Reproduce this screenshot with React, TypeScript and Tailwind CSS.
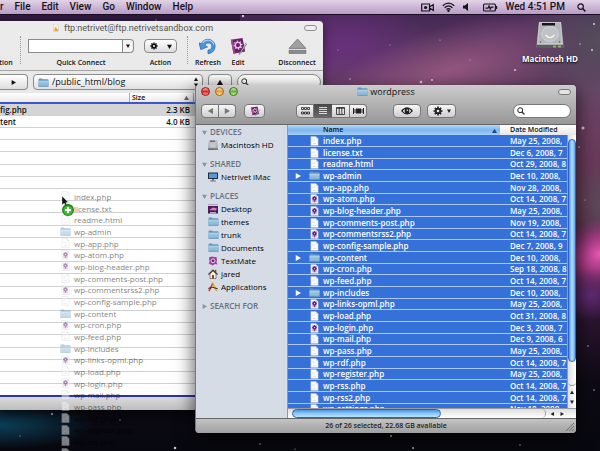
import type { ReactNode } from "react";
import clsx from "clsx";

type Kind = "file" | "php" | "folder";

const files: { name: string; kind: Kind; date: string }[] = [
  { name: "index.php", kind: "file", date: "May 25, 2008," },
  { name: "license.txt", kind: "file", date: "Dec 6, 2008, 7" },
  { name: "readme.html", kind: "file", date: "Oct 29, 2008, 8" },
  { name: "wp-admin", kind: "folder", date: "Dec 10, 2008," },
  { name: "wp-app.php", kind: "file", date: "Nov 28, 2008," },
  { name: "wp-atom.php", kind: "php", date: "Oct 14, 2008, 7" },
  { name: "wp-blog-header.php", kind: "php", date: "May 25, 2008," },
  { name: "wp-comments-post.php", kind: "file", date: "Nov 19, 2008," },
  { name: "wp-commentsrss2.php", kind: "php", date: "Oct 14, 2008, 7" },
  { name: "wp-config-sample.php", kind: "file", date: "Dec 7, 2008, 9" },
  { name: "wp-content", kind: "folder", date: "Dec 10, 2008," },
  { name: "wp-cron.php", kind: "php", date: "Sep 18, 2008, 8" },
  { name: "wp-feed.php", kind: "file", date: "Oct 14, 2008, 7" },
  { name: "wp-includes", kind: "folder", date: "Dec 10, 2008," },
  { name: "wp-links-opml.php", kind: "php", date: "May 25, 2008," },
  { name: "wp-load.php", kind: "file", date: "Oct 31, 2008, 8" },
  { name: "wp-login.php", kind: "php", date: "Dec 3, 2008, 7" },
  { name: "wp-mail.php", kind: "file", date: "Dec 9, 2008, 6" },
  { name: "wp-pass.php", kind: "file", date: "May 25, 2008," },
  { name: "wp-rdf.php", kind: "file", date: "Oct 14, 2008, 7" },
  { name: "wp-register.php", kind: "file", date: "May 25, 2008," },
  { name: "wp-rss.php", kind: "file", date: "Oct 14, 2008, 7" },
  { name: "wp-rss2.php", kind: "file", date: "Oct 14, 2008, 7" },
  { name: "wp-settings.php", kind: "file", date: "Nov 10, 2008," },
];

const stars = [
  [243, 16, 1.2], [421, 82, 1.3], [432, 80, 1], [515, 70, 1], [594, 24, 1], [592, 50, 1],
  [580, 44, 0.7], [583, 128, 1.5], [579, 147, 0.8], [350, 79, 0.7], [338, 50, 0.5], [470, 60, 0.5],
  [440, 40, 0.5], [390, 45, 0.5], [52, 414, 1], [175, 448, 1.3], [120, 420, 0.6], [20, 436, 0.6],
  [260, 444, 0.7], [391, 436, 1], [413, 448, 0.9], [588, 346, 0.7], [594, 390, 0.7], [585, 200, 0.6],
  [295, 449, 0.6], [520, 445, 0.7], [156, 20, 0.6],
];

function Wallpaper() {
  return (
    <svg className="absolute inset-0 h-full w-full" viewBox="0 0 600 451" preserveAspectRatio="none" aria-hidden="true">
      <defs>
        <linearGradient id="sky" x1="0" y1="0" x2="0" y2="1">
          <stop offset="0" stopColor="#3d2350" />
          <stop offset="0.2" stopColor="#6b4468" />
          <stop offset="0.45" stopColor="#683450" />
          <stop offset="0.7" stopColor="#2c1530" />
          <stop offset="0.85" stopColor="#0d0a14" />
          <stop offset="1" stopColor="#07080f" />
        </linearGradient>
        <radialGradient id="violet">
          <stop offset="0" stopColor="#6f2f86" stopOpacity="0.75" />
          <stop offset="1" stopColor="#6f2f86" stopOpacity="0" />
        </radialGradient>
        <radialGradient id="rose">
          <stop offset="0" stopColor="#a8608c" stopOpacity="0.7" />
          <stop offset="1" stopColor="#a8608c" stopOpacity="0" />
        </radialGradient>
        <radialGradient id="pink">
          <stop offset="0" stopColor="#e85ab6" />
          <stop offset="0.4" stopColor="#c04094" stopOpacity="0.8" />
          <stop offset="1" stopColor="#a03080" stopOpacity="0" />
        </radialGradient>
        <radialGradient id="grey">
          <stop offset="0" stopColor="#55505c" stopOpacity="0.9" />
          <stop offset="1" stopColor="#55505c" stopOpacity="0" />
        </radialGradient>
        <radialGradient id="teal">
          <stop offset="0" stopColor="#0b4560" stopOpacity="0.9" />
          <stop offset="1" stopColor="#0b4560" stopOpacity="0" />
        </radialGradient>
      </defs>
      <rect width="600" height="451" fill="url(#sky)" />
      <ellipse cx="345" cy="45" rx="90" ry="50" fill="url(#violet)" />
      <ellipse cx="450" cy="70" rx="150" ry="45" fill="url(#rose)" transform="rotate(-18 450 70)" />
      <ellipse cx="600" cy="40" rx="80" ry="75" fill="url(#grey)" />
      <ellipse cx="605" cy="205" rx="38" ry="45" fill="url(#grey)" />
      <ellipse cx="600" cy="254" rx="48" ry="36" fill="url(#pink)" transform="rotate(-25 600 254)" />
      <ellipse cx="590" cy="295" rx="35" ry="26" fill="url(#violet)" />
      <ellipse cx="0" cy="425" rx="95" ry="24" fill="url(#teal)" />
      <rect y="14" width="240" height="7" fill="#241230" opacity="0.7" />
      {stars.map(([x, y, r]) => (
        <circle key={`${x}-${y}`} cx={x} cy={y} r={r} fill="#f3dcf0" opacity="0.85" />
      ))}
    </svg>
  );
}

function FolderIcon({ className }: { className?: string }) {
  return (
    <svg viewBox="0 0 12 10" className={clsx("h-[9px] w-[11px] shrink-0", className)} aria-hidden="true">
      <path d="M.5 2V1.2Q.5.5 1.2.5H4.200L5.200 1.500H10.800Q11.500 1.500 11.500 2.200V9.500H.5Z" fill="#6398be" />
      <path d="M.5 3H11.500V9.500H.5Z" fill="#8fbddb" />
      <path d="M.5 3H11.500V5H.5Z" fill="#a9cfe6" />
      <path d="M.5 9.200H11.500" stroke="#5689ad" strokeWidth=".7" />
    </svg>
  );
}

function FileIcon({ php }: { php?: boolean }) {
  return (
    <svg viewBox="0 0 9 11" className="h-[10px] w-[9px] shrink-0" aria-hidden="true">
      <path d="M.5.5H6L8.500 3V10.500H.5Z" fill="#fafafa" stroke="#c4c8d0" strokeWidth=".5" />
      <path d="M6 .5V3H8.500Z" fill="#c9ced8" />
      {php ? (
        <>
          <path d="M2 2.500H7V9H5.500L4.500 10L3.500 9H2Z" fill="#c9a6d2" />
          <circle cx="4.500" cy="5" r="2.300" fill="#6d2f7e" />
          <path d="M4.500 2.200V8.800M2.200 5H6.800M3 3.400L6 6.600M6 3.400L3 6.600" stroke="#58226a" strokeWidth=".8" />
          <circle cx="4.500" cy="5" r=".7" fill="#e9d3ee" />
        </>
      ) : (
        <path d="M3 8.300H6M2 4.500H5" stroke="#d5d5d5" strokeWidth=".8" />
      )}
    </svg>
  );
}

function KindIcon({ kind }: { kind: Kind }) {
  return (
    <span className="flex w-[11px] shrink-0 items-center justify-center">
      {kind === "folder" ? <FolderIcon /> : <FileIcon php={kind === "php"} />}
    </span>
  );
}

function GearIcon({ className }: { className?: string }) {
  return (
    <svg viewBox="0 0 12 12" className={className} aria-hidden="true">
      <g stroke="currentColor" strokeWidth="2">
        <path d="M6 .6V11.400M.6 6H11.400M2.200 2.200L9.800 9.800M9.800 2.200L2.200 9.800" />
      </g>
      <circle cx="6" cy="6" r="3.900" fill="currentColor" />
      <circle cx="6" cy="6" r="1.600" fill="#ececec" />
    </svg>
  );
}

function EditIcon({ className }: { className?: string }) {
  return (
    <svg viewBox="0 0 20 20" className={className} aria-hidden="true">
      <path d="M2 3L15 1L18 16L5 18.500Z" fill="#6d1f6b" />
      <path d="M2 3L4 2.700L7 18.100L5 18.500Z" fill="#9c4c97" />
      <g transform="rotate(-9 10 9)" stroke="#e3bfe3" strokeWidth="1.500" fill="none">
        <circle cx="10" cy="9" r="3" />
        <path d="M10 4V6M10 12V14M5 9H7M13 9H15M6.500 5.500L8 7M12 11L13.500 12.500M13.500 5.500L12 7M8 11L6.500 12.500" />
      </g>
      <path d="M18.500 7L12 17.500L11 19.500L13 18L19.500 8Z" fill="#e8e8e8" stroke="#444" strokeWidth=".6" />
    </svg>
  );
}

function SearchIcon({ className }: { className?: string }) {
  return (
    <svg viewBox="0 0 10 10" className={className} fill="none" stroke="currentColor" aria-hidden="true">
      <circle cx="4" cy="4" r="3" strokeWidth="1.300" />
      <path d="M6.200 6.200L9.300 9.300" strokeWidth="1.700" />
    </svg>
  );
}

function Triangle({ dir, className }: { dir: "up" | "down" | "left" | "right"; className?: string }) {
  const paths = { up: "M0 8L4 1L8 8Z", down: "M0 1L4 8L8 1Z", left: "M8 0L1 4L8 8Z", right: "M1 0L8 4L1 8Z" };
  return (
    <svg viewBox="0 0 8 8" className={clsx("shrink-0", className)} fill="currentColor" aria-hidden="true">
      <path d={paths[dir]} />
    </svg>
  );
}

function DriveIcon({ className }: { className?: string }) {
  return (
    <svg viewBox="0 0 28 28" className={className} aria-hidden="true">
      <path d="M3 1H25L27.500 24V27H.5V24Z" fill="#8d8f92" />
      <path d="M3 1H25L27 23.500H1Z" fill="#c6c8ca" />
      <path d="M4 2H24L25.500 22H2.500Z" fill="#b3b5b8" />
      <path d="M6 2H19V4.500H6Z" fill="#17171a" />
      <ellipse cx="14" cy="13" rx="8.500" ry="7.500" fill="#c0c2c5" stroke="#d6d8da" strokeWidth=".7" />
      <path d="M9.500 14Q14 19 18.500 14" fill="none" stroke="#f7f7f7" strokeWidth="1.200" />
      <circle cx="4.500" cy="21" r=".7" fill="#555" />
      <circle cx="23.500" cy="21" r=".7" fill="#555" />
      <path d="M.5 24H27.500V27H.5Z" fill="#5a5c5f" />
      <path d="M17 24.500H20V26.500H17ZM22 24.500H25V26.500H22Z" fill="#a8a46a" />
    </svg>
  );
}

function MenuBar() {
  return (
    <header className="relative flex h-3.5 items-center bg-linear-to-b from-[#e2d3e6] to-[#b99cc6] pr-3.5 font-['Roboto',sans-serif] text-[10px] leading-[14px] font-medium text-[#17121b] shadow-[0_1px_0_#1a0d24]">
      <nav className="flex gap-[11px]">
        <span>r</span>
        {["File", "Edit", "View", "Go", "Window", "Help"].map((m) => (
          <button key={m} type="button">{m}</button>
        ))}
      </nav>
      <div className="ml-auto flex items-center">
        <svg viewBox="0 0 13 9" className="h-[9px] w-[13px]" aria-hidden="true">
          <path d="M.7 1H8.500V8H.7ZM8.500 4L12.300 1.500V7.500L8.500 5" fill="none" stroke="currentColor" strokeWidth="1.200" />
          <circle cx="4.600" cy="4.500" r="1.600" fill="currentColor" />
        </svg>
        <svg viewBox="0 0 14 10" className="ml-2 h-[10px] w-[13px]" fill="none" stroke="currentColor" strokeWidth="1.400" aria-hidden="true">
          <path d="M.8 3.600Q7-1.800 13.200 3.600M2.800 5.700Q7 2 11.200 5.700M4.800 7.600Q7 5.800 9.200 7.600" />
          <circle cx="7" cy="9" r=".6" fill="currentColor" />
        </svg>
        <svg viewBox="0 0 6 8" className="ml-2 h-2 w-1.5" aria-hidden="true">
          <path d="M0 2.500H2L5 0V8L2 5.500H0Z" fill="currentColor" />
        </svg>
        <svg viewBox="0 0 15 9" className="ml-3.5 h-[9px] w-[15px]" fill="none" stroke="currentColor" aria-hidden="true">
          <rect x=".6" y="1" width="11.800" height="7" rx="1" strokeWidth="1.100" />
          <path d="M13.500 3V6" strokeWidth="1.300" />
          <path d="M2.500 5.200H5L6 3L7.300 6L8.200 4.200H10.500" strokeWidth="1.200" />
        </svg>
        <span className="ml-2">Wed 4:51 PM</span>
        <SearchIcon className="ml-3 h-[9px] w-[9px]" />
      </div>
    </header>
  );
}

function ToolItem({ label, className, children }: { label: string; className?: string; children: ReactNode }) {
  return (
    <div className={clsx("flex shrink-0 flex-col items-center", className)}>
      <div className="flex h-5 w-full items-center justify-center">{children}</div>
      <span className="mt-0.5 text-[7px] leading-[10px] font-semibold whitespace-nowrap">{label}</span>
    </div>
  );
}

function FtpWindow() {
  return (
    <section className="absolute top-[21px] left-0 flex h-[389px] w-[323px] flex-col overflow-hidden rounded-tr bg-linear-to-b from-[#ececec] to-[#d4d4d4] text-[#111] shadow-[0_4px_10px_rgba(0,0,0,0.5)]">
      <div className="flex h-3.5 shrink-0 items-center pr-1.5 pl-[52px] text-[#555]">
        <svg viewBox="0 0 10 10" className="h-2 w-2" aria-hidden="true">
          <path d="M2 0H6L8 2V9H2Z" fill="#f8f4e8" stroke="#bbb" strokeWidth=".5" />
          <path d="M3 9Q2 6 5 3L6 6L8 7L7 9Z" fill="#eda632" />
        </svg>
        <h2 className="ml-1 font-['Roboto',sans-serif] text-[9px] leading-[14px]">ftp:netrivet@ftp.netrivetsandbox.com</h2>
        <button type="button" aria-label="Toggle toolbar" className="ml-auto h-1.5 w-[13px] rounded-full border border-[#8f8f8f] bg-[#eee]" />
      </div>
      <div className="flex h-[36px] shrink-0 border-b border-[#a5a5a5] pt-px pr-1.5">
        <ToolItem label="tion" className="w-3"><span /></ToolItem>
        <div className="ml-2 h-7 border-l border-dotted border-[#999]" />
        <ToolItem label="Quick Connect" className="ml-[7px] w-[106px]">
          <div className="flex h-3.5 w-full">
            <input aria-label="Quick Connect" className="h-3.5 min-w-0 flex-1 border border-[#8a8a8a] bg-white" />
            <button type="button" aria-label="Show servers" className="flex w-[11px] items-center justify-center rounded-r-sm border border-l-0 border-[#8a8a8a] bg-[#f2f2f2]">
              <Triangle dir="down" className="size-1" />
            </button>
          </div>
        </ToolItem>
        <ToolItem label="Action" className="ml-2.5 w-[33px]">
          <button type="button" aria-label="Action" className="flex h-3.5 w-full items-center justify-around rounded-sm border border-[#8a8a8a] bg-linear-to-b from-white to-[#dcdcdc]">
            <GearIcon className="size-2" />
            <Triangle dir="down" className="size-[5px]" />
          </button>
        </ToolItem>
        <div className="ml-2.5 h-7 border-l border-dotted border-[#999]" />
        <ToolItem label="Refresh" className="ml-1.5 w-7">
          <svg viewBox="0 0 20 20" className="size-[18px]" aria-hidden="true">
            <path d="M10 18.500A8 8 0 1 0 2.500 7.500L0 6.500L2 14L9.500 11L6.500 9.500A4 4 0 1 1 10 14.500Z" fill="#4b96df" stroke="#2463ab" strokeWidth=".8" />
            <path d="M4 6.500A7 7 0 0 1 16.500 8.500" fill="none" stroke="#a9d3f7" strokeWidth="1.200" />
          </svg>
        </ToolItem>
        <ToolItem label="Edit" className="ml-1.5 w-5">
          <EditIcon className="size-[18px]" />
        </ToolItem>
        <ToolItem label="Disconnect" className="ml-auto w-10">
          <svg viewBox="0 0 20 16" className="h-[15px] w-[19px]" aria-hidden="true">
            <path d="M10 0L19 10H1Z" fill="#a0a0a0" stroke="#6e6e6e" strokeWidth=".8" />
            <path d="M1 12H19V15.500H1Z" fill="#8a8a8a" stroke="#666" strokeWidth=".6" />
          </svg>
        </ToolItem>
      </div>
      <div className="flex h-[22px] shrink-0 items-center">
        <button type="button" aria-label="Forward" className="flex h-4 w-7 items-center justify-center rounded-r border border-l-0 border-[#8c8c8c] bg-linear-to-b from-white to-[#dedede]">
          <Triangle dir="right" className="size-[5px]" />
        </button>
        <div className="ml-[5px] flex h-4 w-[170px] items-center rounded border border-[#8c8c8c] bg-linear-to-b from-white to-[#e0e0e0] pr-1 pl-1">
          <FolderIcon />
          <select aria-label="Remote path" className="h-3.5 min-w-0 flex-1 appearance-none pl-[3px] text-[9px] leading-[14px] font-medium">
            <option>/public_html/blog</option>
          </select>
          <span className="flex flex-col gap-0.5">
            <Triangle dir="up" className="size-1" />
            <Triangle dir="down" className="size-1" />
          </span>
        </div>
        <button type="button" aria-label="Parent folder" className="ml-[5px] flex h-4 w-6 items-center justify-center rounded border border-[#8c8c8c] bg-linear-to-b from-white to-[#dedede]">
          <Triangle dir="up" className="size-1.5" />
        </button>
        <label className="ml-[5px] flex h-4 w-[84px] items-center rounded-full border border-[#8c8c8c] bg-white pl-[3px]">
          <SearchIcon className="size-2 text-[#444]" />
          <input aria-label="Search files" className="min-w-0 flex-1" />
        </label>
      </div>
      <div className="flex-1 border-b-2 border-[#2b35a8] bg-white">
        <table className="w-full table-fixed border-separate border-spacing-0 text-[8px] leading-[11px] font-semibold">
          <thead>
            <tr className="h-[11px] bg-linear-to-b from-white to-[#e6e6e6] text-left text-[7px]">
              <th aria-label="Name" className="w-[129px] border-b-2 border-[#3f55cf]" />
              <th className="w-16 border-b-2 border-b-[#3f55cf] p-0 leading-[9px] font-semibold">
                <span className="flex items-center justify-between border-l border-[#aaa] pr-1 pl-0.5">
                  Size
                  <Triangle dir="up" className="size-[5px] text-[#666]" />
                </span>
              </th>
              <th aria-label="Date" className="border-b-2 border-l border-b-[#3f55cf] border-l-[#aaa]" />
            </tr>
          </thead>
          <tbody>
            {Array.from({ length: 23 }, (_, i) => (
              <tr key={i} className={clsx("h-3 nth-[5n]:h-[13px]", i === 0 && "bg-[#d4d4d4]")}>
                <td className="border-b border-[#d0d0d0] p-0">{["fig.php", "tent"][i]}</td>
                <td className="border-b border-[#d0d0d0] p-0 pr-[3px] text-right">{["2.3 KB", "4.0 KB"][i]}</td>
                <td className="border-b border-[#d0d0d0] p-0" />
              </tr>
            ))}
          </tbody>
        </table>
      </div>
      <div className="h-[13px] shrink-0 bg-linear-to-b from-[#dcdcdc] to-[#bdbdbd]" />
    </section>
  );
}

function DragGhost() {
  return (
    <div className="pointer-events-none absolute top-[190px] left-[60px]">
      <ul className="text-[8px] leading-[11px] font-medium text-black opacity-50">
        {files.slice(0, 23).map((f) => (
          <li key={f.name} className="flex h-3 items-center gap-[3px] nth-[3n]:h-[11px]">
            <KindIcon kind={f.kind} />
            <span>{f.name}</span>
          </li>
        ))}
      </ul>
      <svg viewBox="0 0 14 22" className="absolute top-1.5 left-0.5 h-[22px] w-3.5" aria-hidden="true">
        <path d="M0 0V9L2.200 7.200L3.800 10.500L5.400 9.700L3.800 6.600H6.500Z" fill="#111" stroke="#fff" strokeWidth=".4" />
        <circle cx="6" cy="14" r="6" fill="#1d7a1d" />
        <circle cx="6" cy="14.500" r="4.800" fill="#45b53a" />
        <path d="M6 11V17M3 14H9" stroke="#fff" strokeWidth="1.800" />
      </svg>
    </div>
  );
}

const toolButton =
  "flex h-3.5 items-center justify-center border border-[#777] bg-linear-to-b from-[#f6f6f6] to-[#cfcfcf] text-[#222]";

function SideHeading({ children, closed }: { children: ReactNode; closed?: boolean }) {
  return (
    <h3 className="flex h-3 items-center gap-[3px] text-[8px] leading-3 font-semibold text-[#66717f]">
      <Triangle dir={closed ? "right" : "down"} className="size-[5px] text-[#8b94a0]" />
      {children}
    </h3>
  );
}

function SideItem({ icon, children }: { icon: ReactNode; children: ReactNode }) {
  return (
    <a href="#" className="flex h-[13px] items-center gap-[3px] pl-1.5 text-[8px] leading-3 font-medium text-black">
      <span className="flex w-2.5 shrink-0 justify-center">{icon}</span>
      {children}
    </a>
  );
}

function Sidebar() {
  return (
    <aside className="flex w-[92px] shrink-0 flex-col gap-[7px] border-r border-[#8e98a8] bg-[#d6dce6] pt-px pl-1.5">
      <div>
        <SideHeading>DEVICES</SideHeading>
        <SideItem icon={<DriveIcon className="size-2.5" />}>Macintosh HD</SideItem>
      </div>
      <div>
        <SideHeading>SHARED</SideHeading>
        <SideItem
          icon={
            <svg viewBox="0 0 10 10" className="size-2.5" aria-hidden="true">
              <path d="M0 .5H10V7H0Z" fill="#222c38" />
              <path d="M1 1.500H9V6H1Z" fill="#4e9be0" />
              <path d="M4 7H6V8.500H8V9.500H2V8.500H4Z" fill="#777" />
            </svg>
          }
        >
          Netrivet iMac
        </SideItem>
      </div>
      <div>
        <SideHeading>PLACES</SideHeading>
        <SideItem
          icon={
            <svg viewBox="0 0 10 10" className="size-2.5" aria-hidden="true">
              <path d="M0 .5H10V9.500H0Z" fill="#4b1c56" />
              <path d="M0 .5H10V2H0Z" fill="#dfc6e4" />
              <path d="M1 6L5 3.500L9 4.500L8 6.500Z" fill="#e277c2" />
              <path d="M2 8H8V9.500H2Z" fill="#9fb4d0" />
            </svg>
          }
        >
          Desktop
        </SideItem>
        <SideItem icon={<FolderIcon />}>themes</SideItem>
        <SideItem icon={<FolderIcon />}>trunk</SideItem>
        <SideItem icon={<FolderIcon />}>Documents</SideItem>
        <SideItem
          icon={
            <svg viewBox="0 0 10 10" className="size-2.5" aria-hidden="true">
              <path d="M1 1.500L4 .5L6 1L8.500 1L9 4L8.500 6L9.500 8.500L7 8L4.500 9.500L3 8.500L1 8L1.500 5Z" fill="#9a3f9b" />
              <circle cx="5" cy="4.800" r="2" fill="none" stroke="#e7c2ea" />
              <circle cx="5" cy="4.800" r=".7" fill="#4c1455" />
            </svg>
          }
        >
          TextMate
        </SideItem>
        <SideItem
          icon={
            <svg viewBox="0 0 10 10" className="size-2.5" aria-hidden="true">
              <path d="M2 5V9.500H8V5L5 2Z" fill="#fdf6e6" stroke="#54402e" strokeWidth=".6" />
              <path d="M.4 5.500L5 1L9.600 5.500" fill="none" stroke="#5d3a22" strokeWidth="1.200" />
              <path d="M7 .8H8.300V3H7Z" fill="#a3392a" />
              <path d="M4 6H6V9.500H4Z" fill="#8a4a2a" />
            </svg>
          }
        >
          jared
        </SideItem>
        <SideItem
          icon={
            <svg viewBox="0 0 11 10" className="h-2.5 w-[11px]" fill="none" aria-hidden="true">
              <path d="M5.500.5L1 9.500" stroke="#c93426" strokeWidth="1.600" />
              <path d="M5 .5L9.500 9.500" stroke="#e2a92c" strokeWidth="1.600" />
              <path d="M.3 6.500Q5 4 10.700 7" stroke="#3b2a20" strokeWidth="1.100" />
            </svg>
          }
        >
          Applications
        </SideItem>
      </div>
      <SideHeading closed>SEARCH FOR</SideHeading>
    </aside>
  );
}

function FileList() {
  return (
    <div className="flex min-w-0 flex-1 flex-col bg-white">
      <div className="relative min-h-0 flex-1 overflow-hidden">
        <table className="w-full table-fixed border-separate border-spacing-0 text-[8px] leading-[10px] font-semibold text-white">
          <thead>
            <tr className="h-2.5 text-left text-[7px] text-[#111]">
              <th className="bg-linear-to-b from-[#b5d7f8] via-[#7db6f0] to-[#a4d0f8] p-0 font-semibold">
                <span className="flex items-center justify-between pr-[3px] pl-[35px]">
                  Name
                  <Triangle dir="up" className="size-[5px] text-[#264a78]" />
                </span>
              </th>
              <th className="w-[76px] bg-linear-to-b from-white to-[#e6e6e6] p-0 pl-2.5 font-semibold">Date Modified</th>
            </tr>
          </thead>
          <tbody>
            {files.map((f) => (
              <tr key={f.name} className="h-3 bg-[#3571d8] nth-[3n]:h-[11px]">
                <td className="border-b border-[#a9c8f5] p-0">
                  <span className="flex items-center pl-[7px]">
                    <Triangle dir="right" className={clsx("size-1.5", f.kind !== "folder" && "invisible")} />
                    <span className="ml-2 flex h-2.5 items-center gap-[3px]">
                      <KindIcon kind={f.kind} />
                      {f.name}
                    </span>
                  </span>
                </td>
                <td className="overflow-hidden border-b border-[#a9c8f5] p-0 pl-2.5 whitespace-nowrap">{f.date}</td>
              </tr>
            ))}
          </tbody>
        </table>
        <div className="absolute top-2.5 right-0 bottom-0 flex w-[9px] flex-col items-center border-l border-[#9a9a9a] bg-linear-to-r from-[#dedede] to-white text-[#222]">
          <div className="mt-1 h-[224px] w-2 rounded-full border border-[#2d62bd] bg-linear-to-r from-[#4b90e6] via-[#b5e0fc] to-[#5aa4ee]" />
          <div className="mt-auto mb-1 h-6 w-full rounded-b-full border-b border-[#999]" />
          <Triangle dir="up" className="mb-1.5 size-1" />
          <Triangle dir="down" className="mb-1 size-1" />
        </div>
      </div>
      <div className="flex h-2.5 shrink-0 items-center border-t border-[#9a9a9a] bg-linear-to-b from-[#dedede] to-white pr-3 pl-1 text-[#222]">
        <div className="h-[9px] w-[149px] rounded-full border border-[#2d62bd] bg-linear-to-b from-[#4b90e6] via-[#8cc8fa] to-[#b5e4fd]" />
        <div className="ml-auto h-[9px] w-5 rounded-r-full border-r border-[#999]" />
        <Triangle dir="left" className="ml-1 size-1" />
        <Triangle dir="right" className="ml-1.5 size-1" />
      </div>
    </div>
  );
}

function FinderWindow() {
  return (
    <section className="absolute top-[85px] right-6 bottom-[18px] left-[195px] flex flex-col overflow-hidden rounded-t rounded-b-sm border-l border-[#777] bg-[#b5b5b5] shadow-[0_6px_18px_2px_rgba(0,0,0,0.6)]">
      <div className="flex h-10 shrink-0 flex-col border-b border-[#666] bg-linear-to-b from-[#cccccc] to-[#989898] px-[5px]">
        <div className="grid h-[13px] grid-cols-3 items-center">
          <div className="flex gap-[5px]">
            <button type="button" aria-label="Close" className="size-[9px] rounded-full border border-[#8b1a1a] bg-linear-to-b from-[#f0a8a4] via-[#e0222c] to-[#ff8f86]" />
            <button type="button" aria-label="Minimize" className="size-[9px] rounded-full border border-[#96601a] bg-linear-to-b from-[#fbd6a0] via-[#f09a2c] to-[#ffe98f]" />
            <button type="button" aria-label="Zoom" className="size-[9px] rounded-full border border-[#3c6e1c] bg-linear-to-b from-[#cbe8b4] via-[#62b238] to-[#ccf58e]" />
          </div>
          <h2 className="flex items-center justify-center gap-0.5 text-[9px] leading-3 text-[#111]">
            <FolderIcon />
            wordpress
          </h2>
          <button type="button" aria-label="Toggle toolbar" className="h-1.5 w-[13px] justify-self-end rounded-full border border-[#777] bg-[#e4e4e4]" />
        </div>
        <div className="mt-1.5 flex items-center">
          <button type="button" aria-label="Back" className={clsx(toolButton, "w-[18px] rounded-l-sm")}>
            <Triangle dir="left" className="size-1.5 text-[#777]" />
          </button>
          <button type="button" aria-label="Forward" className={clsx(toolButton, "w-[17px] rounded-r-sm border-l-0")}>
            <Triangle dir="right" className="size-1.5 text-[#777]" />
          </button>
          <button type="button" aria-label="Edit in TextMate" className={clsx(toolButton, "ml-2 w-[21px] rounded-sm")}>
            <EditIcon className="size-2.5" />
          </button>
          <div className="ml-[31px] flex">
            <button type="button" aria-label="Icon view" className={clsx(toolButton, "w-[18px] rounded-l-sm")}>
              <svg viewBox="0 0 9 8" className="h-2 w-[9px]" fill="none" stroke="currentColor" aria-hidden="true">
                <path d="M.5.5H2.500V2.500H.5ZM3.500.5H5.500V2.500H3.500ZM6.500.5H8.500V2.500H6.500ZM.5 5H2.500V7H.5ZM3.500 5H5.500V7H3.500ZM6.500 5H8.500V7H6.500Z" strokeWidth=".8" />
              </svg>
            </button>
            <button type="button" aria-label="List view" className="flex h-3.5 w-[18px] items-center justify-center bg-linear-to-b from-[#484848] to-[#6a6a6a] text-white">
              <svg viewBox="0 0 8 8" className="size-2" stroke="currentColor" aria-hidden="true">
                <path d="M0 .5H8M0 2.500H8M0 4.500H8M0 6.500H8" strokeWidth=".8" />
              </svg>
            </button>
            <button type="button" aria-label="Column view" className={clsx(toolButton, "w-[18px] border-l-0")}>
              <svg viewBox="0 0 9 8" className="h-2 w-[9px]" fill="none" stroke="currentColor" aria-hidden="true">
                <path d="M.5.5H8.500V7.500H.5ZM3.200.5V7.500M5.800.5V7.500M.5 1.300H8.500" strokeWidth=".8" />
              </svg>
            </button>
            <button type="button" aria-label="Cover Flow view" className={clsx(toolButton, "w-[17px] rounded-r-sm border-l-0")}>
              <svg viewBox="0 0 11 8" className="h-2 w-[11px]" fill="currentColor" aria-hidden="true">
                <path d="M0 1H1V7H0ZM1.500 2H2.500V6H1.500ZM3 1.500H8V6.500H3ZM8.500 2H9.500V6H8.500ZM10 1H11V7H10Z" />
              </svg>
            </button>
          </div>
          <button type="button" aria-label="Quick Look" className={clsx(toolButton, "ml-[26px] w-7 rounded-sm")}>
            <svg viewBox="0 0 12 8" className="h-2 w-3" aria-hidden="true">
              <path d="M0 4Q6-3.500 12 4Q6 11 0 4Z" fill="#222" />
              <path d="M1.800 4Q3 2.300 4 2Q3.200 4 4 6Q3 5.700 1.800 4ZM10.200 4Q9 2.300 8 2Q8.800 4 8 6Q9 5.700 10.200 4Z" fill="#eee" />
              <circle cx="6.500" cy="3.200" r=".8" fill="#eee" />
            </svg>
          </button>
          <button type="button" aria-label="Action" className={clsx(toolButton, "ml-1.5 w-[29px] gap-1 rounded-sm")}>
            <GearIcon className="size-2.5" />
            <Triangle dir="down" className="size-1" />
          </button>
          <label className="ml-auto flex h-3.5 w-[58px] items-center rounded-full border border-[#777] bg-white pl-[3px] text-[#333]">
            <SearchIcon className="size-2 shrink-0" />
            <input aria-label="Search" className="min-w-0 flex-1" />
          </label>
        </div>
      </div>
      <div className="flex min-h-0 flex-1">
        <Sidebar />
        <FileList />
      </div>
      <footer className="relative flex h-[15px] shrink-0 items-center justify-center border-t border-[#666] bg-linear-to-b from-[#c4c4c4] to-[#a0a0a0] text-[7px] leading-3 font-semibold text-[#222]">
        26 of 26 selected, 22.68 GB available
        <svg viewBox="0 0 8 8" className="absolute right-0.5 bottom-0.5 size-2" stroke="#666" strokeWidth=".9" aria-hidden="true">
          <path d="M0 8L8 0M3 8L8 3M6 8L8 6" />
        </svg>
      </footer>
    </section>
  );
}

export default function App() {
  return (
    <main className="relative h-screen w-full overflow-hidden font-['Open_Sans',sans-serif]">
      <Wallpaper />
      <MenuBar />
      <div className="absolute top-[21px] right-[18px] flex w-16 flex-col items-center">
        <DriveIcon className="size-7" />
        <span className="mt-1 text-[8px] leading-3 font-bold whitespace-nowrap text-white [text-shadow:0_1px_2px_#000]">Macintosh HD</span>
      </div>
      <FtpWindow />
      <DragGhost />
      <FinderWindow />
    </main>
  );
}
